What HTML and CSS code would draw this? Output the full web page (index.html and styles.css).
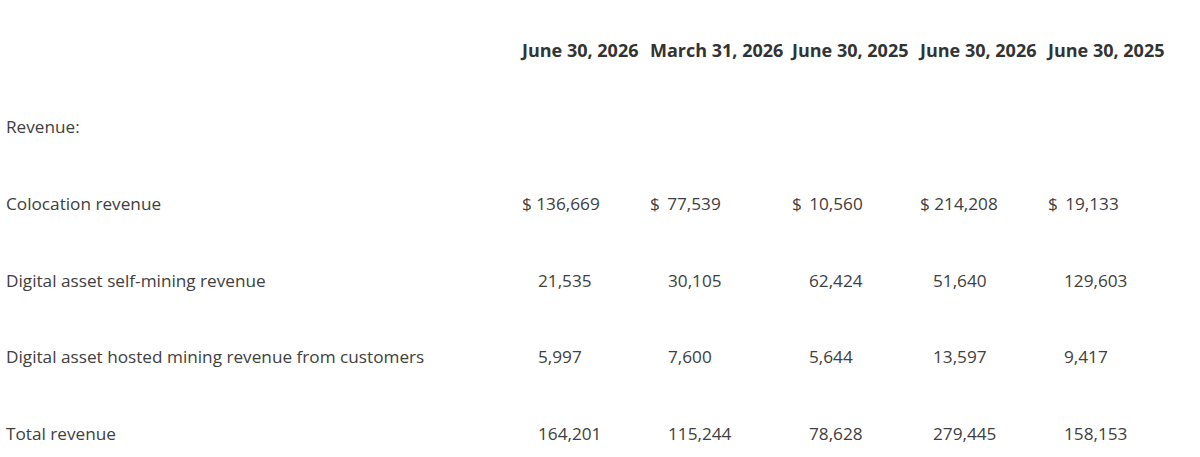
FILE: index.html
```html
<!DOCTYPE html>
<html lang="en">
<head>
<meta charset="utf-8">
<title>Revenue</title>
<link rel="stylesheet" href="styles.css">
</head>
<body>
<table class="fin">
  <thead>
    <tr>
      <th class="label"></th>
      <th>June 30, 2026</th>
      <th>March 31, 2026</th>
      <th>June 30, 2025</th>
      <th>June 30, 2026</th>
      <th>June 30, 2025</th>
    </tr>
  </thead>
  <tbody>
    <tr>
      <td class="label">Revenue:</td>
      <td></td><td></td><td></td><td></td><td></td>
    </tr>
    <tr>
      <td class="label">Colocation revenue</td>
      <td>$ 136,669</td>
      <td>$ &thinsp;77,539</td>
      <td>$ &thinsp;10,560</td>
      <td>$ 214,208</td>
      <td>$ &thinsp;19,133</td>
    </tr>
    <tr class="ind">
      <td class="label">Digital asset self-mining revenue</td>
      <td>21,535</td>
      <td>30,105</td>
      <td>62,424</td>
      <td>51,640</td>
      <td>129,603</td>
    </tr>
    <tr class="ind">
      <td class="label">Digital asset hosted mining revenue from customers</td>
      <td>5,997</td>
      <td>7,600</td>
      <td>5,644</td>
      <td>13,597</td>
      <td>9,417</td>
    </tr>
    <tr class="ind">
      <td class="label">Total revenue</td>
      <td>164,201</td>
      <td>115,244</td>
      <td>78,628</td>
      <td>279,445</td>
      <td>158,153</td>
    </tr>
  </tbody>
</table>
</body>
</html>
```
FILE: styles.css
```css
html, body {
  margin: 0;
  padding: 0;
  background: #ffffff;
}
body {
  font-family: "Open Sans", "Noto Sans", "Liberation Sans", sans-serif;
  font-size: 17.2px;
  color: #404040;
}
.fin {
  border-collapse: collapse;
  table-layout: fixed;
  width: 1170px;
  margin-top: 12px;
}
.fin th, .fin td {
  padding: 0 5px;
  height: 76.6px;
  text-align: left;
  vertical-align: middle;
  white-space: nowrap;
}
.fin th {
  font-weight: 700;
  font-size: 18px;
  color: #333333;
}
.fin th.label, .fin td.label { width: 506px; padding-left: 6px; }
.fin th:nth-child(2) { width: 118px; }
.fin th:nth-child(3) { width: 132px; }
.fin th:nth-child(4) { width: 118px; }
.fin th:nth-child(5) { width: 118px; }
.fin th:nth-child(6) { width: 118px; }
.fin .ind td:nth-child(2) { padding-left: 21px; }
.fin .ind td:nth-child(3) { padding-left: 23px; }
.fin .ind td:nth-child(4) { padding-left: 22px; }
.fin .ind td:nth-child(5) { padding-left: 18px; }
.fin .ind td:nth-child(6) { padding-left: 21px; }
```
